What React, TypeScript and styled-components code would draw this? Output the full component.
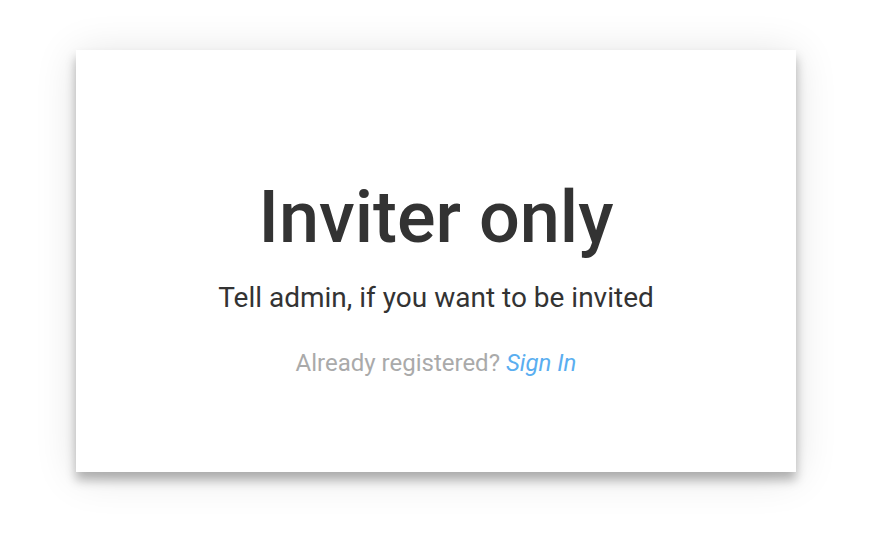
import React from "react";
import styled, { createGlobalStyle } from "styled-components";

const GlobalStyle = createGlobalStyle`
  html, body {
    margin: 0;
    padding: 0;
    background: #ffffff;
    font-family: Roboto, "Liberation Sans", Arial, sans-serif;
  }
`;

const Page = styled.div`
  min-height: 100vh;
  box-sizing: border-box;
  padding: 50px 0 0 76px;
`;

const Card = styled.div`
  width: 720px;
  height: 422px;
  box-sizing: border-box;
  background: #fff;
  box-shadow: 0 8px 10px rgba(0, 0, 0, 0.28), 0 4px 40px rgba(0, 0, 0, 0.12);
  display: flex;
  flex-direction: column;
  align-items: center;
  padding-top: 132px;
`;

const Title = styled.h1`
  margin: 0;
  font-size: 72px;
  font-weight: 500;
  line-height: 1;
  color: #333;
`;

const Subtitle = styled.p`
  margin: 30px 0 0;
  font-size: 28px;
  line-height: 1;
  color: #333;
`;

const Hint = styled.p`
  margin: 39px 0 0;
  font-size: 24px;
  line-height: 1;
  color: #aaa;
`;

const Link = styled.a`
  color: #5aaef0;
  font-style: italic;
  text-decoration: none;
`;

export default function App() {
  return (
    <>
      <GlobalStyle />
      <Page>
        <Card>
          <Title>Inviter only</Title>
          <Subtitle>Tell admin, if you want to be invited</Subtitle>
          <Hint>
            Already registered? <Link href="#">Sign In</Link>
          </Hint>
        </Card>
      </Page>
    </>
  );
}
